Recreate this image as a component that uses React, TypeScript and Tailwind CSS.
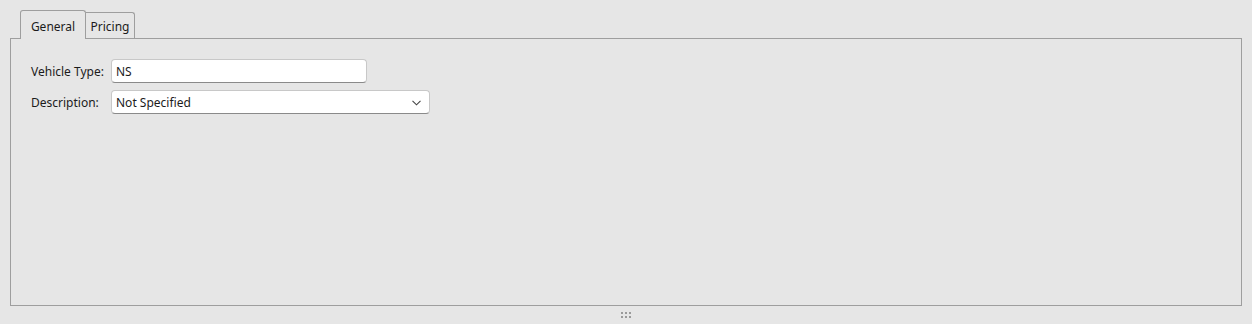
import React from "react";

export default function App() {
  return (
    <div
      className="w-[1252px] h-[324px] bg-[#e6e6e6] text-[#1b1b1b] flex flex-col"
      style={{ fontFamily: '"Noto Sans", "Open Sans", sans-serif' }}
    >
      <div className="px-[10px] pt-[10px]">
        <div className="flex items-end pl-[10px] h-[28px] relative z-10">
          <div className="h-[29px] w-[66px] -mb-px border border-b-0 border-[#9e9e9e] rounded-t-[3px] bg-[#e6e6e6] flex items-center justify-center text-[12px] pt-[3px]">
            General
          </div>
          <div className="h-[26px] w-[49px] border border-l-0 border-b-0 border-[#9e9e9e] rounded-tr-[3px] bg-[#e6e6e6] flex items-center justify-center text-[12px] pt-[2px]">
            Pricing
          </div>
        </div>
        <div className="h-[268px] border border-[#9e9e9e] bg-[#e6e6e6] pt-[20px] pl-[20px]">
          <div className="flex items-center h-[24px]">
            <span className="w-[80px] text-[12px] pt-[1px]">Vehicle Type:</span>
            <div className="w-[256px] h-[24px] bg-white border border-[#c8c8c8] border-b-[#8a8a8a] rounded-[4px] flex items-center pl-[4px] pt-[1px] text-[12px]">
              NS
            </div>
          </div>
          <div className="flex items-center h-[24px] mt-[7px]">
            <span className="w-[80px] text-[12px] pt-[1px]">Description:</span>
            <div className="w-[319px] h-[24px] bg-white border border-[#c8c8c8] border-b-[#8a8a8a] rounded-[4px] flex items-center justify-between pl-[4px] pr-[8px] pt-[1px] text-[12px]">
              <span>Not Specified</span>
              <svg width="9" height="6" viewBox="0 0 9 6" fill="none">
                <path d="M0.5 0.8 L4.5 4.8 L8.5 0.8" stroke="#444" strokeWidth="1.1" />
              </svg>
            </div>
          </div>
        </div>
      </div>
      <div className="flex-1 flex items-center justify-center">
        <div className="grid grid-cols-3 gap-x-[2px] gap-y-[2px]">
          {[0, 1, 2, 3, 4, 5].map((i) => (
            <div key={i} className="w-[2px] h-[2px] bg-[#9a9a9a]" />
          ))}
        </div>
      </div>
    </div>
  );
}
